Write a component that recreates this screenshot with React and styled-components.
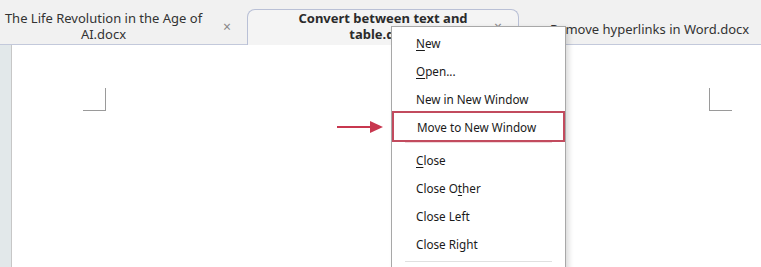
import React from "react";
import styled, { createGlobalStyle } from "styled-components";

const Global = createGlobalStyle`
  html, body { margin: 0; padding: 0; background: #fff; }
  body { font-family: "Noto Sans", "Open Sans", sans-serif; width: 761px; height: 267px; overflow: hidden; }
`;

const Frame = styled.div`
  position: relative;
  width: 761px;
  height: 267px;
  overflow: hidden;
  display: flex;
  flex-direction: column;
`;

const TabBar = styled.div`
  height: 44px;
  background: #f1f1f1;
  border-bottom: 1px solid #c3c9db;
  display: flex;
  align-items: flex-end;
  flex-shrink: 0;
`;

const Tab = styled.div`
  position: relative;
  width: ${(p) => p.$w}px;
  height: 44px;
  box-sizing: border-box;
  display: flex;
  align-items: center;
  justify-content: ${(p) => (p.$align === "left" ? "flex-start" : "center")};
  padding: ${(p) => p.$pad || "0"};
  background: transparent;
`;

const ActiveTab = styled(Tab)`
  height: 36px;
  background: #f4f4f4;
  border: 1px solid #b9c0d6;
  border-bottom: none;
  border-radius: 8px 8px 0 0;
  margin-bottom: -1px;
  padding: 0 24px 3px 24px;
`;

const TabTitle = styled.div`
  font-size: 13px;
  line-height: 16px;
  color: ${(p) => (p.$active ? "#2b2b2b" : "#333")};
  font-weight: ${(p) => (p.$active ? 700 : 400)};
  text-align: center;
  white-space: ${(p) => (p.$nowrap ? "nowrap" : "normal")};
`;

const Close = styled.span`
  position: absolute;
  right: ${(p) => p.$r}px;
  top: ${(p) => p.$t}px;
  font-size: 14px;
  color: #888;
  line-height: 1;
`;

const Body = styled.div`
  flex: 1;
  display: flex;
`;

const Gutter = styled.div`
  width: 11px;
  background: #e2e8ea;
  border-right: 1px solid #c7c7c7;
`;

const Page = styled.div`
  flex: 1;
  background: #fff;
  display: flex;
  justify-content: space-between;
  align-items: flex-start;
  padding: 43px 29px 0 71px;
`;

const Corner = styled.div`
  width: 23px;
  height: 23px;
  box-sizing: border-box;
  border-bottom: 1px solid #9a9a9a;
  ${(p) => (p.$side === "left" ? "border-right: 1px solid #9a9a9a;" : "border-left: 1px solid #9a9a9a;")}
`;

const Menu = styled.div`
  position: absolute;
  left: 391px;
  top: 26px;
  width: 175px;
  height: 260px;
  box-sizing: border-box;
  background: #fff;
  border: 1px solid #a8a8a8;
  padding-top: 2px;
  box-shadow: 3px 2px 5px rgba(0, 0, 0, 0.14);
  display: flex;
  flex-direction: column;
`;

const Item = styled.div`
  height: 28px;
  box-sizing: border-box;
  display: flex;
  align-items: center;
  padding-left: ${(p) => (p.$hl ? 23 : 24)}px;
  font-size: 11.7px;
  color: #1a1a1a;
  ${(p) =>
    p.$hl &&
    `border: 2px solid #c24b5e; margin: -2px 0 -1px 0; height: 31px;`}
`;

const U = styled.span`
  text-decoration: underline;
  text-underline-offset: 2px;
`;

const Sep = styled.div`
  height: 1px;
  background: ${(p) => p.$c || "#e0e0e0"};
  margin: ${(p) => p.$m || "3px 13px 2px 13px"};
`;

const Arrow = styled.svg`
  position: absolute;
  left: 336px;
  top: 120px;
`;

export default function App() {
  return (
    <Frame>
      <Global />
      <TabBar>
        <Tab $w={247} $pad="7px 40px 0 0">
          <TabTitle>The Life Revolution in the Age of AI.docx</TabTitle>
          <Close $r={16} $t={20}>×</Close>
        </Tab>
        <ActiveTab $w={272}>
          <TabTitle $active>Convert between text and table.docx</TabTitle>
          <Close $r={16} $t={10}>×</Close>
        </ActiveTab>
        <Tab $w={242} $align="left" $pad="14px 0 0 31px">
          <TabTitle $nowrap>Remove hyperlinks in Word.docx</TabTitle>
        </Tab>
      </TabBar>
      <Body>
        <Gutter />
        <Page>
          <Corner $side="left" />
          <Corner $side="right" />
        </Page>
      </Body>
      <Arrow width="50" height="14" viewBox="0 0 50 14">
        <line x1="1" y1="7" x2="36" y2="7" stroke="#c8374f" strokeWidth="2.2" />
        <polygon points="34,1 47,7 34,13" fill="#c8374f" />
      </Arrow>
      <Menu>
        <Item><U>N</U>ew</Item>
        <Item><U>O</U>pen...</Item>
        <Item>New in New Window</Item>
        <Item $hl>Move to New Window</Item>
        <Sep $c="#f0d6da" $m="1px 13px 3px 13px" />
        <Item><U>C</U>lose</Item>
        <Item>Close O<U>t</U>her</Item>
        <Item>Close Left</Item>
        <Item>Close Right</Item>
        <Sep />
      </Menu>
    </Frame>
  );
}
